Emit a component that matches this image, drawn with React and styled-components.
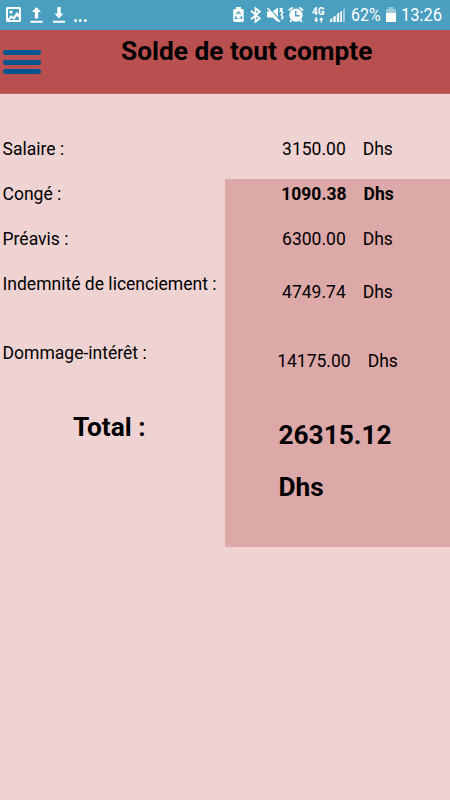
import styled, { createGlobalStyle } from "styled-components";

const GlobalStyle = createGlobalStyle`
  * {
    box-sizing: border-box;
  }

  body {
    margin: 0;
    background: #efd3d3;
    color: #000;
    font-family: Roboto, "Liberation Sans", sans-serif;
  }
`;

const Screen = styled.div`
  display: flex;
  flex-direction: column;
  min-height: 100vh;
  background: #efd3d3;
`;

const StatusBar = styled.div`
  display: flex;
  align-items: center;
  height: 30px;
  padding: 0 9px 0 5px;
  background: #4a9ebf;
  color: #fff;
`;

const StatusIcon = styled.svg`
  display: block;
  flex: none;
  width: ${({ $width }) => $width}px;
  height: 30px;
  margin-right: ${({ $gap }) => $gap || 0}px;
  fill: #fff;
`;

const Spacer = styled.div`
  flex: 1;
`;

const StatusText = styled.span`
  flex: none;
  width: ${({ $width }) => $width}px;
  margin-right: ${({ $gap }) => $gap || 0}px;
  font-size: 19px;
  line-height: 30px;
  white-space: nowrap;
  transform: scaleX(${({ $stretch }) => $stretch});
  transform-origin: 0 50%;
`;

const Network = styled.div`
  flex: none;
  width: 14px;
  height: 30px;
  margin-right: 4px;
  padding-top: 7px;
  font-size: 10px;
  font-weight: 700;
  line-height: 10px;
`;

const NetworkArrows = styled.svg`
  display: block;
  width: 14px;
  height: 6px;
  fill: #fff;
`;

const Header = styled.header`
  display: flex;
  height: 64px;
  background: #b9504f;
  border-bottom: 1px solid #c0605f;
`;

const MenuButton = styled.button`
  display: flex;
  flex-direction: column;
  gap: 4.5px;
  width: 121px;
  height: 64px;
  padding: 20px 0 0 3px;
  border: 0;
  background: none;
`;

const MenuLine = styled.span`
  width: 38px;
  height: 5px;
  border-radius: 3px;
  background: #04568f;
`;

const Title = styled.h1`
  margin: 0;
  font-size: 26.25px;
  font-weight: 700;
  line-height: 43px;
  white-space: nowrap;
`;

const Summary = styled.main`
  padding-top: 40px;
`;

const Row = styled.div`
  display: grid;
  grid-template-columns: 225px 1fr;
  height: ${({ $height }) => $height || 45}px;
`;

const Label = styled.div`
  padding-left: 2.5px;
  font-size: 17.55px;
  line-height: 30px;
  white-space: nowrap;
`;

const Amount = styled.div`
  display: flex;
  justify-content: center;
  gap: 17px;
  padding-top: ${({ $offset }) => $offset || 0}px;
  background: ${({ $shaded }) => ($shaded ? "#dda9a8" : "transparent")};
  font-size: 17.5px;
  font-weight: ${({ $bold }) => ($bold ? 700 : 400)};
  line-height: 30px;
`;

const TotalLabel = styled.div`
  padding-left: 73px;
  font-size: 26.25px;
  font-weight: 700;
  line-height: 41px;
`;

const TotalAmount = styled.div`
  display: flex;
  flex-direction: column;
  padding: 2px 0 0 53.5px;
  background: #dda9a8;
  font-size: 26.25px;
  font-weight: 700;
  line-height: 52px;
`;

const rows = [
  { label: "Salaire :", value: "3150.00" },
  { label: "Congé :", value: "1090.38", shaded: true, bold: true },
  { label: "Préavis :", value: "6300.00", shaded: true },
  {
    label: "Indemnité de licenciement :",
    value: "4749.74",
    shaded: true,
    height: 69,
    offset: 7.5,
  },
  {
    label: "Dommage-intérêt :",
    value: "14175.00",
    shaded: true,
    height: 69,
    offset: 7.5,
  },
];

const PhoneStatus = () => (
  <StatusBar>
    <StatusIcon $width={17} $gap={7} viewBox="0 0 17 30">
      <path
        fillRule="evenodd"
        d="M2 7h13l1 1v13l-1 1H2l-1-1V8zM3 9v10l3-4 2 2 4-5 2 2V9zM4 20h10v-2l-2-2-3 4-2-2z"
      />
      <circle cx="6" cy="12" r="1.6" />
    </StatusIcon>
    <StatusIcon $width={14} $gap={9} viewBox="0 0 14 30">
      <path d="M7.5 7l4.5 5H9.2v6.5H5.8V12H3zM1.5 20.8h12v2h-12z" />
    </StatusIcon>
    <StatusIcon $width={14} $gap={8} viewBox="0 0 14 30">
      <path d="M5.3 7h3.4v6.5h2.8L7 18.5l-4.5-5h2.8zM1 20.8h12v2H1z" />
    </StatusIcon>
    <StatusIcon $width={15} viewBox="0 0 15 30">
      <circle cx="1.6" cy="20.5" r="1.5" />
      <circle cx="6.4" cy="20.5" r="1.5" />
      <circle cx="11.4" cy="20.5" r="1.5" />
    </StatusIcon>
    <Spacer />
    <StatusIcon $width={11} $gap={6} viewBox="0 0 11 30">
      <path d="M3 7h5v2h2l.7 1v11l-1 1H1.2l-1-1V10L1 9h2z" />
      <path
        d="M3.5 14.2L5.5 12l2 2.2M8.2 16l.5 2.2H6.5M4.7 18.3H2.4l.7-2.5"
        fill="none"
        stroke="#4a9ebf"
        strokeWidth="1.2"
      />
    </StatusIcon>
    <StatusIcon $width={12} $gap={5} viewBox="0 0 12 30">
      <path
        d="M1 10.8l8.8 7.6-4.3 3.3V8.3l4.3 3.3L1 19.2"
        fill="none"
        stroke="#fff"
        strokeWidth="1.8"
      />
    </StatusIcon>
    <StatusIcon $width={17} $gap={4} viewBox="0 0 17 30">
      <path d="M0 11.5h5.5L11 7.5v14.5l-5.5-4.5H0z" />
      <path d="M1.5 7.5L14 21.5" stroke="#4a9ebf" strokeWidth="1.3" />
      <path
        d="M.5 8L12.7 21.8M13 8l1 2-1 2M15.5 8l-1.3 2.2 1.6 2.3-1.6 2.3 1.6 2.3-1.3 2.4"
        fill="none"
        stroke="#fff"
        strokeWidth="1.6"
      />
    </StatusIcon>
    <StatusIcon $width={16} $gap={8} viewBox="0 0 16 30">
      <circle cx="8" cy="15.2" r="6.6" />
      <path
        d="M.8 10.5L4.6 7.4M15.2 10.5l-3.8-3.1M3.5 20l-1.3 2M12.5 20l1.3 2"
        stroke="#fff"
        strokeWidth="1.8"
      />
      <path
        d="M7.7 11v4.7h4"
        fill="none"
        stroke="#4a9ebf"
        strokeWidth="1.5"
      />
    </StatusIcon>
    <Network>
      4G
      <NetworkArrows viewBox="0 0 14 6">
        <path d="M3.5 0h1.4v2.5h1.5L4.2 5.5 2 2.5h1.5zM8.6 5.5V3H7.1L9.3 0l2.2 3H10v2.5z" />
      </NetworkArrows>
    </Network>
    <StatusIcon $width={16} $gap={5} viewBox="0 0 16 30">
      <path d="M0 22v-2.5L2.2 18v4zM3.3 22v-5l2.4-1.6V22zM6.8 22v-7.7l2.4-2V22z" />
      <path d="M10.3 22V12l1.7-1.6V22z" />
      <path d="M13 22V9.5L15 8v14z" opacity="0.45" />
    </StatusIcon>
    <StatusText $width={29} $gap={6} $stretch={0.84}>
      62%
    </StatusText>
    <StatusIcon $width={10} $gap={5} viewBox="0 0 10 30">
      <path d="M2.5 7h5v2H10v4H0V9h2.5z" opacity="0.45" />
      <path d="M0 13h10v9H0z" />
    </StatusIcon>
    <StatusText $width={40} $stretch={0.87}>
      13:26
    </StatusText>
  </StatusBar>
);

const App = () => {
  return (
    <Screen>
      <GlobalStyle />
      <PhoneStatus />
      <Header>
        <MenuButton aria-label="Menu">
          <MenuLine />
          <MenuLine />
          <MenuLine />
        </MenuButton>
        <Title>Solde de tout compte</Title>
      </Header>
      <Summary>
        {rows.map(({ label, value, shaded, bold, height, offset }) => (
          <Row key={label} $height={height}>
            <Label>{label}</Label>
            <Amount $shaded={shaded} $bold={bold} $offset={offset}>
              <span>{value}</span>
              <span>Dhs</span>
            </Amount>
          </Row>
        ))}
        <Row $height={140}>
          <TotalLabel>Total :</TotalLabel>
          <TotalAmount>
            <span>26315.12</span>
            <span>Dhs</span>
          </TotalAmount>
        </Row>
      </Summary>
    </Screen>
  );
};

export default App;
